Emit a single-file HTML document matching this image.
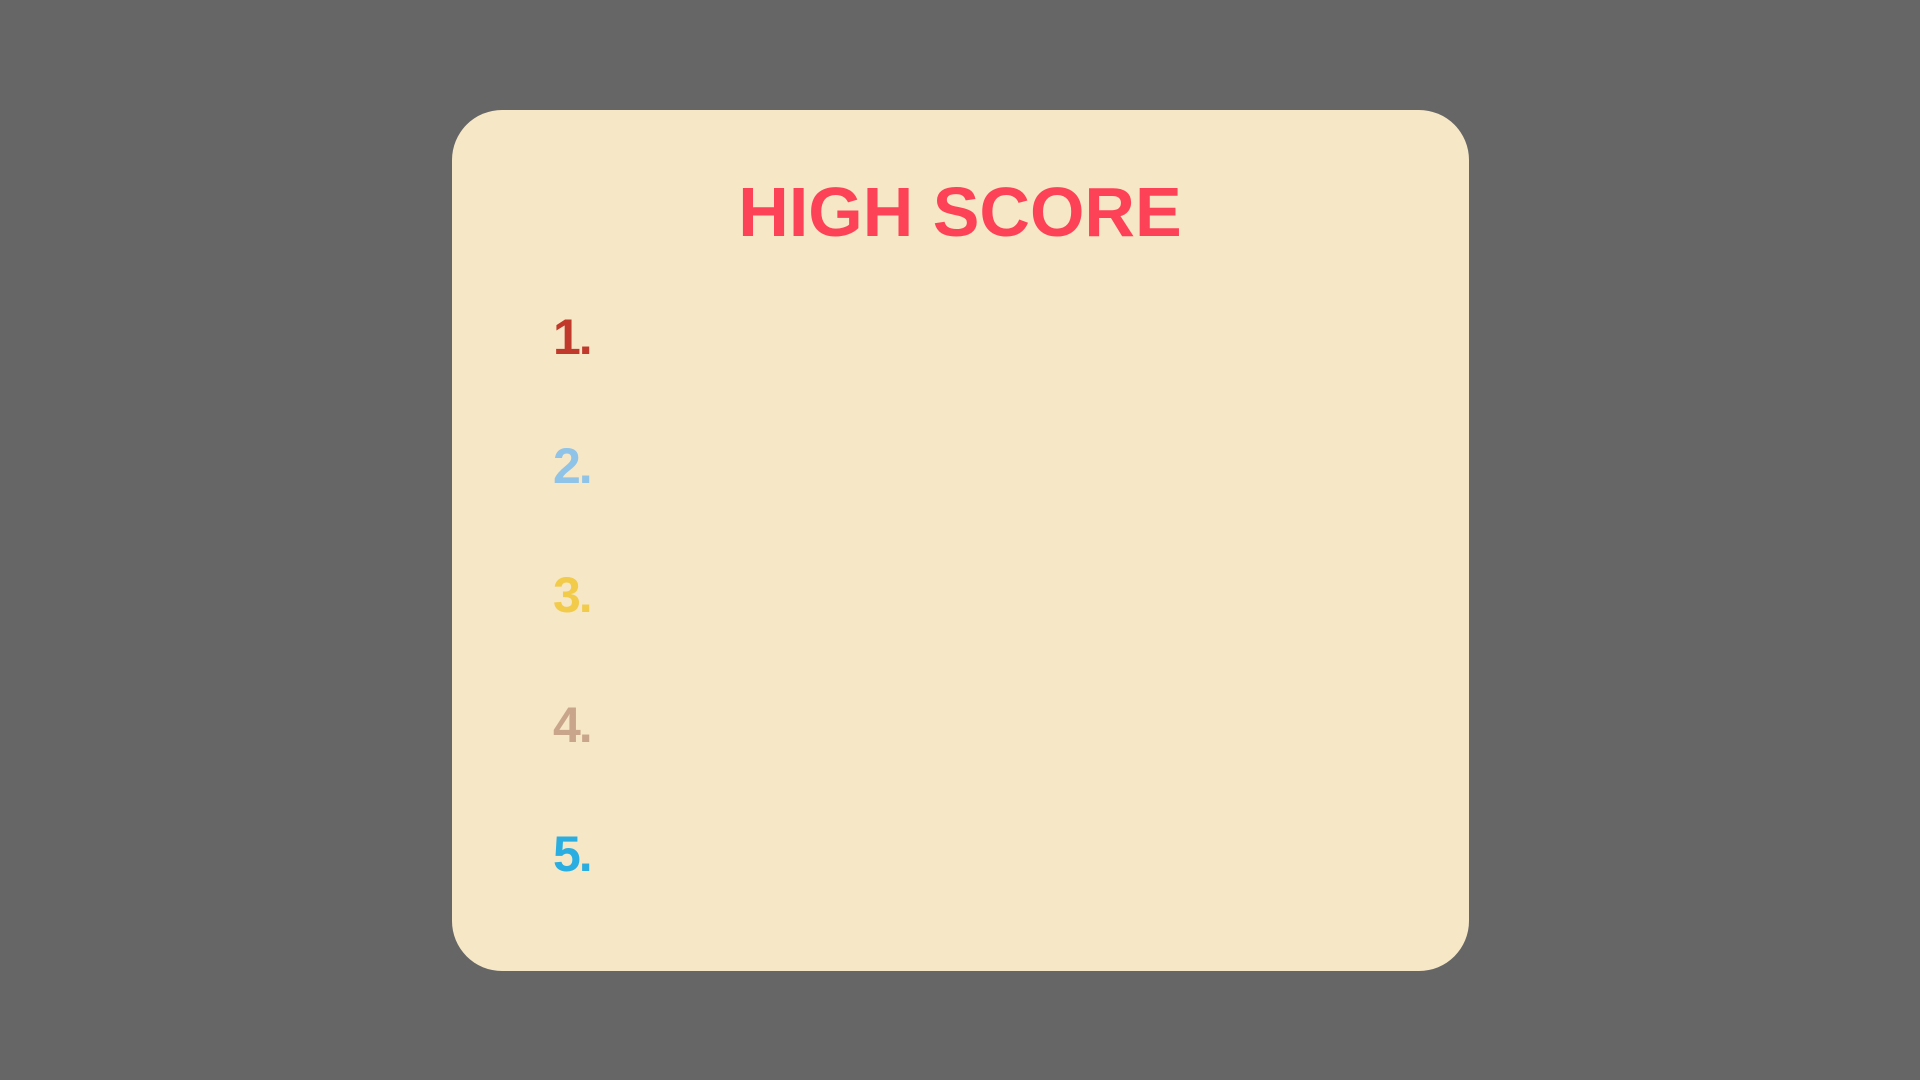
<!DOCTYPE html>
<html><head><style>
html,body{margin:0;padding:0;width:1920px;height:1080px;background:#666666;overflow:hidden}
.card{position:absolute;left:452px;top:110px;width:1017px;height:861px;background:#f6e7c6;border-radius:50px}
.title{position:absolute;left:0;width:100%;top:167px;text-align:center;font:bold 70px "Liberation Sans",sans-serif;color:#fd4257;letter-spacing:0px;line-height:90px}
.n{position:absolute;left:553px;font:bold 50px "Liberation Sans",sans-serif;line-height:60px;letter-spacing:-2px}
</style></head><body>
<div class="card"></div>
<div class="title">HIGH SCORE</div>
<div class="n" style="top:307px;color:#c0392b">1.</div>
<div class="n" style="top:436px;color:#8fc3e8">2.</div>
<div class="n" style="top:565px;color:#f2cb4a">3.</div>
<div class="n" style="top:695px;color:#c9a68b">4.</div>
<div class="n" style="top:824px;color:#2aade0">5.</div>
</body></html>
